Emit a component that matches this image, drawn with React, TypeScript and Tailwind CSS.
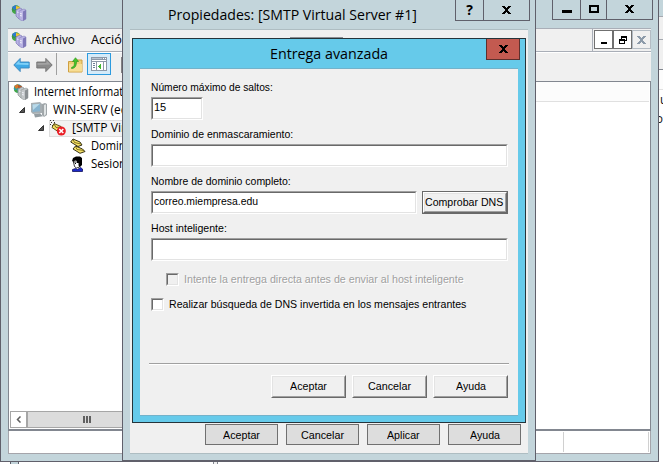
import { useLayoutEffect, useRef, useState } from "react";
import type { ReactNode } from "react";

const SANS = "font-['Liberation_Sans',Arial,sans-serif]";
const SEGOE = "font-['Open_Sans','Noto_Sans',sans-serif]";

/* One line of text squeezed to an exact width. */
function Fit({ w, className = "", children }: { w: number; className?: string; children: string }) {
  const ref = useRef<HTMLSpanElement>(null);
  const [scale, setScale] = useState(1);
  useLayoutEffect(() => {
    if (ref.current) setScale(w / ref.current.offsetWidth);
  }, [w]);
  return (
    <span className={`block shrink-0 ${className}`} style={{ width: w }}>
      <span
        ref={ref}
        className="inline-block origin-left whitespace-nowrap"
        style={{ transform: `scaleX(${scale})` }}
      >
        {children}
      </span>
    </span>
  );
}

function ServerIcon({ globe = true, purple = false }: { globe?: boolean; purple?: boolean }) {
  const face = purple ? "#b9b3e3" : "#c3c7c9";
  const side = purple ? "#7f78b8" : "#8b9093";
  return (
    <svg className="h-4 w-4 shrink-0" viewBox="0 0 16 16">
      {globe && (
        <>
          <circle cx="5" cy="4.5" r="4.2" fill={purple ? "#3a9a45" : "#2f9f9a"} />
          <path d="M1 2l4-2 1 3-3 2z" fill={purple ? "#2e79d0" : "#d8792b"} />
          <path d="M5 1l4 1-1 4-3-2z" fill={purple ? "#f0c62c" : "#b9552a"} />
          <path d="M1 6l3 0 1 3-3-1z" fill="#45a846" />
        </>
      )}
      <path d="M5 5l4-2 2 1v8l-3 2-3-3z" fill={face} stroke={side} strokeWidth=".7" />
      <path d="M8 6l5-2 2 1v9l-4 2-3-2z" fill={face} stroke={side} strokeWidth=".5" />
      <path d="M12 6.500l3-1.500v9l-3 2z" fill={side} />
      <path d="M9 8.500l2 .5M9 10.500l2 .5M6 7l1.500.4" fill="none" stroke="#f3f4fa" strokeWidth=".9" />
    </svg>
  );
}

function ComputerIcon() {
  return (
    <svg className="h-4 w-4 shrink-0" viewBox="0 0 16 16">
      <path d="M11 2l3-1 2 1v11l-3 2-2-2z" fill="#a0a6a9" />
      <path d="M13 3l2-.7v10L13 14z" fill="#dfe3e4" />
      <path d="M0 1l9-1 2 2v9l-9 1-2-2z" fill="#a6aeb2" />
      <path d="M1.5 2.5L9 1.8v7.4L1.5 10z" fill="#86b3cf" />
      <path d="M1.5 2.5L9 1.8 2 8z" fill="#b9d9e8" />
      <path d="M3 12l6-.8 3 3-8 1.300z" fill="#949da2" />
    </svg>
  );
}

function MailServerIcon() {
  return (
    <svg className="h-4 w-4 shrink-0" viewBox="0 0 16 16">
      <path d="M0 0h1v1H0zM3 0h1v1H3zM1 2h1v1H1zM0 4h1v1H0zM2 5h1v1H2zM4 2h1v1H4z" fill="#333" shapeRendering="crispEdges" />
      <path d="M4 3.500l7 3 2 3-5 2-6-4z" fill="#f3de62" stroke="#4b430e" strokeWidth=".9" />
      <path d="M4 4l2 3.500 5-.5" fill="none" stroke="#4b430e" strokeWidth=".7" />
      <circle cx="11.3" cy="11" r="4.5" fill="#ea1d25" />
      <path d="M9.3 9l4 4M13.3 9l-4 4" stroke="#fff" strokeWidth="1.6" />
    </svg>
  );
}

function EnvelopesIcon() {
  return (
    <svg className="h-4 w-4 shrink-0" viewBox="0 0 16 16">
      <path d="M3 1l7 3 2 3-4 1.500L.7 4z" fill="#f8e36a" stroke="#1f1c05" strokeWidth=".9" />
      <path d="M3 1.500l1.500 3 6.500 1.500" fill="none" stroke="#655909" strokeWidth=".8" />
      <path d="M5.500 8l7 3 2.500 2.500-5 1.800L3 11z" fill="#f8e36a" stroke="#1f1c05" strokeWidth=".9" />
      <path d="M5.500 8.500l1.500 3 7 1" fill="none" stroke="#655909" strokeWidth=".8" />
    </svg>
  );
}

function PersonIcon() {
  return (
    <svg className="h-4 w-4 shrink-0" viewBox="0 0 16 16">
      <path d="M3.500 6h6v5l-3 1-2-1.500z" fill="#fff" stroke="#000" strokeWidth=".8" />
      <path d="M3 2l3-1.500h4L12 2v7l-2 2-1.500-1.500V7H7V5L5 4.500 3.500 6 2 5z" fill="#000" />
      <path d="M2.500 15.500v-2l3-1 2 1 3-2 2 1.500v2.500z" fill="#1c29c9" stroke="#00004c" strokeWidth=".7" />
      <path d="M5 7h1v1H5z" fill="#000" />
    </svg>
  );
}

function Arrow({ left = false }: { left?: boolean }) {
  return (
    <svg className={`h-4 w-[17px] shrink-0 ${left ? "" : "-scale-x-100"}`} viewBox="0 0 17 16">
      <path
        d="M.8 8l6.4-6.6V5h9v6h-9v3.6z"
        fill={left ? "#3fa9e6" : "#8b8b8b"}
        stroke={left ? "#3c86bc" : "#707070"}
        strokeWidth=".9"
      />
      <path d="M2.5 7.6l4-4V6h9v2z" fill={left ? "#7fd0f7" : "#a3a3a3"} />
    </svg>
  );
}

function FolderUp() {
  return (
    <svg className="h-4 w-[15px] shrink-0" viewBox="0 0 15 16">
      <path d="M.5 4.5h5l1-1.500h7.500v12H.5z" fill="#f0cf78" stroke="#cf9f40" />
      <path d="M1 7h13v7.500H1z" fill="#f7dd94" />
      <path d="M3.500 10.500C6 10 6.500 8 6.500 4.500H4.500L7.500.7l3 3.800h-2C8.500 9 7 11.500 3.500 11.500z" fill="#45c52c" stroke="#299116" strokeWidth=".6" />
    </svg>
  );
}

function ConsoleIcon() {
  return (
    <svg className="h-[14px] w-4 shrink-0" viewBox="0 0 16 14" shapeRendering="crispEdges">
      <path d="M0 0h16v14H0z" fill="#8d99a8" />
      <path d="M1 3h14v1H1zM1 5h14v8H1z" fill="#fff" />
      <path d="M1 1h10v1H1z" fill="#b8c3cf" />
      <path d="M12 1h1v1h-1zM14 1h1v1h-1z" fill="#fff" />
      <path d="M5 5h1v8H5zM12 5h1v8h-1z" fill="#8d99a8" />
      <path d="M2 6h2v1H2zM2 8h2v1H2zM2 10h2v1H2z" fill="#6b7f96" />
      <path d="M10 7v5H9v-1H8v-1H7V9h1V8h1V7z" fill="#43b82f" />
    </svg>
  );
}

function Cross({ className }: { className: string }) {
  return (
    <svg className={`h-2 w-[9px] ${className}`} viewBox="0 0 9 8" shapeRendering="crispEdges" fill="currentColor">
      <path d="M0 0h3v1H0zM6 0h3v1H6zM1 1h3v1H1zM5 1h3v1H5zM2 2h5v1H2zM3 3h3v2H3zM2 5h5v1H2zM1 6h3v1H1zM5 6h3v1H5zM0 7h3v1H0zM6 7h3v1H6z" />
    </svg>
  );
}

function RestoreIcon() {
  return (
    <svg className="h-2 w-2" viewBox="0 0 8 8" shapeRendering="crispEdges">
      <path d="M2 0h6v5H6V4h1V2H3v1H2zM0 3h6v5H0zM1 5v2h4V5z" fill="#000" fillRule="evenodd" />
    </svg>
  );
}

function Expander() {
  return (
    <svg className="h-[6px] w-[6px] shrink-0" viewBox="0 0 6 6">
      <path d="M5.500.5v5h-5z" fill="#555" stroke="#333" />
    </svg>
  );
}

function TreeRow({ pad, open = false, selected = false, gap = "gap-[5px]", icon, w, children }: {
  pad: string; open?: boolean; selected?: boolean; gap?: string; icon: ReactNode; w: number; children: string;
}) {
  return (
    <div className={`flex h-[18px] shrink-0 items-center ${pad}`}>
      {open && <span className="mr-[6px] flex"><Expander /></span>}
      <div className={`flex h-[17px] items-center ${gap} ${selected ? "-ml-px w-[120px] border border-[#dedede] bg-[#f2f2f2]" : ""}`}>
        {icon}
        <Fit w={w} className="leading-[16px]">{children}</Fit>
      </div>
    </div>
  );
}

function Field({ label, lw, width = "w-[357px]", value, vw = 0, children }: {
  label: string; lw: number; width?: string; value?: string; vw?: number; children?: ReactNode;
}) {
  return (
    <div className="mb-[6px] h-[41px]">
      <div className="flex h-[18px] items-start"><Fit w={lw} className="leading-[16px]">{label}</Fit></div>
      <div className="flex gap-[5px]">
        <div className={`h-[23px] border border-b-white border-l-[#a0a0a0] border-r-white border-t-[#a0a0a0] ${width}`}>
          <div className="flex h-full border border-b-[#e3e3e3] border-l-[#696969] border-r-[#e3e3e3] border-t-[#696969] bg-white pl-px pt-px">
            {value && <Fit w={vw} className="leading-[15px]">{value}</Fit>}
          </div>
        </div>
        {children}
      </div>
    </div>
  );
}

function RaisedButton({ w, children }: { w: number; children: string }) {
  return (
    <div className="h-[23px] w-[75px] border border-b-[#696969] border-l-white border-r-[#696969] border-t-white">
      <div className="flex h-full items-center justify-center border border-b-[#a0a0a0] border-l-[#e3e3e3] border-r-[#a0a0a0] border-t-[#e3e3e3]">
        <Fit w={w} className="leading-[15px]">{children}</Fit>
      </div>
    </div>
  );
}

function FlatButton({ w, children }: { w: number; children: string }) {
  return (
    <div className="flex h-[21px] w-[73px] items-center justify-center border border-[#707070] bg-[#dddddd] pt-px">
      <Fit w={w} className="leading-[15px]">{children}</Fit>
    </div>
  );
}

function Check({ disabled = false, w, children }: { disabled?: boolean; w: number; children: string }) {
  return (
    <div className={`flex h-[13px] items-center gap-[5px] ${disabled ? "ml-[15px] text-[#a0a0a0] [text-shadow:1px_1px_0_#fff]" : ""}`}>
      <div className="h-[13px] w-[13px] border border-b-white border-l-[#a0a0a0] border-r-white border-t-[#a0a0a0]">
        <div className={`h-full border border-b-[#e3e3e3] border-l-[#696969] border-r-[#e3e3e3] border-t-[#696969] ${disabled ? "bg-[#f0f0f0]" : "bg-white"}`} />
      </div>
      <Fit w={w} className="leading-[15px]">{children}</Fit>
    </div>
  );
}

function BackWindow() {
  return (
    <div className="absolute inset-0 flex flex-col bg-white">
      <div className={`flex h-[461px] flex-col items-end text-[12px] text-[#111] ${SEGOE}`}>
        <div className="h-[17px] w-1 border-b border-[#a5a9b0] bg-[#c3d5db]" />
        <div className="h-[23px] w-1 border-b border-[#a5a9b0] bg-[#f0f0f0]" />
        <div className="h-[30px] w-1 border-b border-[#828790] bg-[#f0f0f0]" />
        <div className="h-5 w-1 border-b border-[#e0e0e0] bg-[#fcfcfc]" />
        <div className="h-[19px] w-1 overflow-hidden pl-px leading-[19px]">u</div>
        <div className="flex h-[19px] w-1 justify-end overflow-hidden leading-[19px]">o</div>
      </div>
      <div className="flex h-[3px] pl-[10px]">
        <div className="w-[9px] border-x border-[#60606b] bg-[#c3d5db]" />
        <div className="ml-[194px] w-[5px] border-x border-[#828790] bg-[#f0f0f0]" />
      </div>
    </div>
  );
}

function MainWindow() {
  return (
    <div className={`absolute left-0 top-0 flex h-[462px] w-[659px] flex-col border-x border-b border-[#60606b] bg-[#c3d5db] px-[7px] text-[12px] text-black ${SEGOE}`}>
      <div className="flex h-7 shrink-0 items-start justify-between">
        <div className="pl-[3px] pt-[5px]"><ServerIcon purple /></div>
        <div className="-mr-[2px] flex h-5 w-[101px] border border-t-0 border-[#60606b]">
          <div className="flex w-[28px] justify-center border-r border-[#60606b] pt-[10px]"><div className="h-[3px] w-[10px] bg-black" /></div>
          <div className="flex w-[26px] justify-center border-r border-[#60606b] pt-[5px]"><div className="h-2 w-[10px] border-2 border-black" /></div>
          <div className="flex flex-1 justify-center pt-[5px]"><Cross className="text-black" /></div>
        </div>
      </div>
      <div className="flex h-6 shrink-0 border-b border-t border-[#a9aeb7] bg-[#f0f0f0]">
        <div className="flex flex-1 items-center border-r border-[#a9aeb7] pl-[3px]">
          <ServerIcon purple />
          <Fit w={41} className="ml-[7px] leading-[16px]">Archivo</Fit>
          <Fit w={39} className="ml-4 leading-[16px]">Acción</Fit>
        </div>
        <div className="flex w-[58px] items-start pl-px pt-px">
          <div className="flex h-[19px] w-[19px] items-end justify-center border border-[#707070] bg-white pb-1"><div className="h-[2px] w-[6px] bg-black" /></div>
          <div className="flex h-[19px] w-[19px] items-center justify-center border border-[#707070] bg-white"><RestoreIcon /></div>
          <div className="flex h-[19px] w-[19px] items-center justify-center border border-[#b4bcc4] bg-[#f0f0f0]"><Cross className="w-[7px] text-[#8d9baa]" /></div>
        </div>
      </div>
      <div className="flex h-[29px] shrink-0 items-start border-t border-white bg-[#f0f0f0] pl-[5px]">
        <div className="mt-[3px] flex gap-[6px] pt-px"><Arrow left /><Arrow /></div>
        <div className="ml-[3px] h-[22px] w-px bg-[#a0a0a0]" />
        <div className="ml-[11px] mt-1"><FolderUp /></div>
        <div className="ml-1 flex h-[22px] w-[24px] items-center justify-center border border-[#2d9bdf] bg-[#d5ebf9]"><ConsoleIcon /></div>
        <div className="ml-[10px] mt-[4px] h-4 w-4 bg-[#838383]" />
      </div>
      <div className="flex h-[350px] shrink-0 border border-b-2 border-[#828790] bg-white">
        <div className="flex w-[180px] flex-col">
          <div className="flex flex-1 flex-col pt-px">
            <TreeRow pad="pl-1" icon={<ServerIcon />} w={92}>Internet Informati</TreeRow>
            <TreeRow pad="pl-[10px]" open gap="gap-[6px]" icon={<ComputerIcon />} w={82}>WIN-SERV (edu</TreeRow>
            <TreeRow pad="pl-[29px]" open selected gap="gap-[6px]" icon={<MailServerIcon />} w={85}>[SMTP Virtual S</TreeRow>
            <TreeRow pad="pl-[61px]" icon={<EnvelopesIcon />} w={49}>Dominios</TreeRow>
            <TreeRow pad="pl-[61px]" icon={<PersonIcon />} w={47}>Sesiones</TreeRow>
          </div>
          <div className="mb-px ml-px flex h-[17px]">
            <div className="flex w-[17px] items-center justify-center border border-[#a6a6a6]">
              <svg className="h-[7px] w-[5px]" viewBox="0 0 5 7"><path d="M4.500.5l-3 3 3 3" fill="none" stroke="#606060" strokeWidth="1.500" /></svg>
            </div>
            <div className="flex flex-1 items-center gap-px border border-[#a6a6a6] bg-[#dcdcdc] pl-[55px]">
              <div className="h-[7px] w-[2px] bg-[#606060]" />
              <div className="h-[7px] w-[2px] bg-[#606060]" />
              <div className="h-[7px] w-[2px] bg-[#606060]" />
            </div>
          </div>
        </div>
        <div className="mr-px h-5 flex-1 border-b border-[#e0e0e0] bg-[#fcfcfc]" />
      </div>
      <div className="flex h-[23px] shrink-0 justify-end border-x border-b border-[#a5a5ab] bg-white pr-[1px] pt-px">
        <div className="h-5 w-[86px] border-x border-[#d0d0d0]" />
      </div>
    </div>
  );
}

function PropertiesWindow() {
  return (
    <div className={`absolute left-[122px] top-0 flex h-[462px] w-[414px] flex-col border-x border-b-2 border-[#60606b] bg-[#c3d5db] px-[7px] text-black ${SEGOE}`}>
      <div className="flex h-[29px] shrink-0 items-start justify-between text-[15px]">
        <Fit w={249} className="ml-[38px] pt-[4px] leading-[20px]">Propiedades: [SMTP Virtual Server #1]</Fit>
        <div className="-mr-[2px] flex h-[21px] w-[75px] border border-t-0 border-[#60606b]">
          <div className="flex w-[28px] justify-center border-r border-[#60606b] text-[14px] font-bold leading-[19px]">?</div>
          <div className="flex flex-1 justify-center pr-px pt-[6px]"><Cross className="text-black" /></div>
        </div>
      </div>
      <div className="flex h-[425px] shrink-0 flex-col border-b border-t border-[#aebdc2] bg-[#f0f0f0]">
        <div className="ml-[160px] mt-[7px] h-px w-[53px] bg-[#8c8e94]" />
        <div className={`mt-[386px] flex gap-2 pl-[75px] text-[11px] ${SANS}`}>
          <FlatButton w={37}>Aceptar</FlatButton>
          <FlatButton w={43}>Cancelar</FlatButton>
          <FlatButton w={33}>Aplicar</FlatButton>
          <FlatButton w={30}>Ayuda</FlatButton>
        </div>
      </div>
    </div>
  );
}

function DeliveryDialog() {
  return (
    <div className="absolute left-[132px] top-[38px] flex h-[385px] w-[394px] flex-col border border-[#25343b] bg-[#66caea] px-[7px] text-black">
      <div className={`flex h-[29px] shrink-0 items-start justify-between text-[15px] ${SEGOE}`}>
        <Fit w={118} className="ml-[130px] pt-[4px] leading-[20px]">Entrega avanzada</Fit>
        <div className="-mr-[2px] flex h-[21px] w-[34px] justify-center border border-t-0 border-[#5c302d] bg-[#c35a50] pt-[6px]"><Cross className="text-black" /></div>
      </div>
      <div className={`flex h-[348px] shrink-0 flex-col border-b border-t border-[#73b2ca] bg-[#f0f0f0] pl-[11px] pt-[10px] text-[11px] ${SANS}`}>
        <Field label="Número máximo de saltos:" lw={122} width="w-[52px]" value="15" vw={12} />
        <Field label="Dominio de enmascaramiento:" lw={142} />
        <Field label="Nombre de dominio completo:" lw={140} width="w-[266px]" value="correo.miempresa.edu" vw={104}>
          <div className="h-[23px] w-[86px] border border-[#696969]">
            <div className="h-full border border-b-[#696969] border-l-white border-r-[#696969] border-t-white">
              <div className="flex h-full items-center border border-b-[#a0a0a0] border-l-[#e3e3e3] border-r-[#a0a0a0] border-t-[#e3e3e3]">
                <Fit w={78} className="leading-[15px]">Comprobar DNS</Fit>
              </div>
            </div>
          </div>
        </Field>
        <Field label="Host inteligente:" lw={76} />
        <div className="mt-[6px] flex flex-col gap-3">
          <Check disabled w={280}>Intente la entrega directa antes de enviar al host inteligente</Check>
          <Check w={297}>Realizar búsqueda de DNS invertida en los mensajes entrantes</Check>
        </div>
        <div className="-ml-[2px] mt-[52px] h-[2px] w-[360px] border-b border-t border-b-white border-t-[#a0a0a0]" />
        <div className="mt-[10px] flex gap-[6px] pl-[120px]">
          <RaisedButton w={37}>Aceptar</RaisedButton>
          <RaisedButton w={43}>Cancelar</RaisedButton>
          <RaisedButton w={30}>Ayuda</RaisedButton>
        </div>
      </div>
    </div>
  );
}

export default function App() {
  return (
    <div className="relative h-[464px] w-[663px] overflow-hidden">
      <BackWindow />
      <MainWindow />
      <PropertiesWindow />
      <DeliveryDialog />
    </div>
  );
}
